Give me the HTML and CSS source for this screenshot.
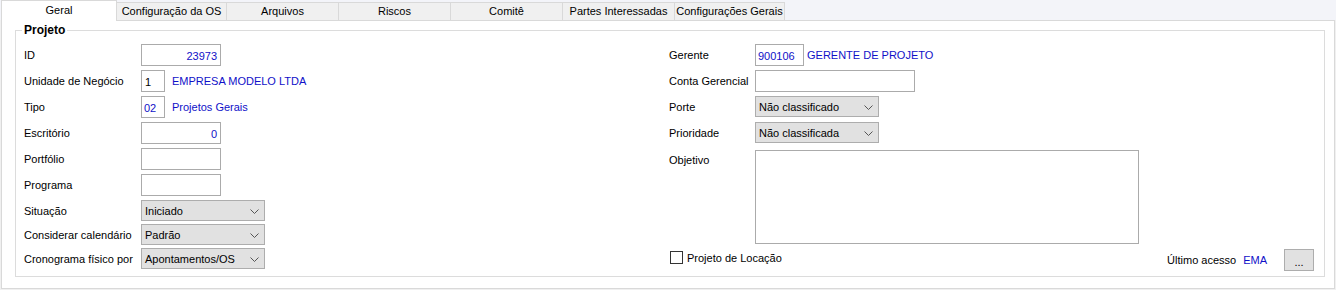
FILE: index.html
```html
<!DOCTYPE html>
<html lang="pt-BR">
<head>
    <meta charset="UTF-8">
    <title>Projeto</title>
    <link rel="stylesheet" href="styles.css">
</head>
<body>

<div class="tabs">
    <div class="tab active" style="width:116px">Geral</div>
    <div class="tab" style="width:111px">Configuração da OS</div>
    <div class="tab" style="width:113px">Arquivos</div>
    <div class="tab" style="width:113px">Riscos</div>
    <div class="tab" style="width:113px">Comitê</div>
    <div class="tab" style="width:113px">Partes Interessadas</div>
    <div class="tab" style="width:111px">Configurações Gerais</div>
</div>

<div class="panel">
    <div class="group">
        <div class="group-title">Projeto</div>
        <div class="cols">

            <!-- coluna esquerda -->
            <div class="col-left">
                <div class="row">
                    <label>ID</label>
                    <div class="box w80 num">23973</div>
                </div>
                <div class="row">
                    <label>Unidade de Negócio</label>
                    <div class="box w24">1</div>
                    <span class="value">EMPRESA MODELO LTDA</span>
                </div>
                <div class="row">
                    <label>Tipo</label>
                    <div class="box w24 blue">02</div>
                    <span class="value">Projetos Gerais</span>
                </div>
                <div class="row">
                    <label>Escritório</label>
                    <div class="box w80 num">0</div>
                </div>
                <div class="row">
                    <label>Portfólio</label>
                    <div class="box w80"></div>
                </div>
                <div class="row">
                    <label>Programa</label>
                    <div class="box w80"></div>
                </div>
                <div class="row combo">
                    <label>Situação</label>
                    <div class="select">Iniciado<svg class="chev" width="9" height="5" viewBox="0 0 9 5"><path d="M0.5 0.5 L4.5 4.5 L8.5 0.5" fill="none" stroke="#555" stroke-width="1"/></svg></div>
                </div>
                <div class="row combo">
                    <label>Considerar calendário</label>
                    <div class="select">Padrão<svg class="chev" width="9" height="5" viewBox="0 0 9 5"><path d="M0.5 0.5 L4.5 4.5 L8.5 0.5" fill="none" stroke="#555" stroke-width="1"/></svg></div>
                </div>
                <div class="row combo">
                    <label>Cronograma físico por</label>
                    <div class="select">Apontamentos/OS<svg class="chev" width="9" height="5" viewBox="0 0 9 5"><path d="M0.5 0.5 L4.5 4.5 L8.5 0.5" fill="none" stroke="#555" stroke-width="1"/></svg></div>
                </div>
            </div>

            <!-- coluna direita -->
            <div class="col-right">
                <div class="row">
                    <label>Gerente</label>
                    <div class="box w48 blue">900106</div>
                    <span class="value near">GERENTE DE PROJETO</span>
                </div>
                <div class="row">
                    <label>Conta Gerencial</label>
                    <div class="box w160"></div>
                </div>
                <div class="row combo wide">
                    <label>Porte</label>
                    <div class="select">Não classificado<svg class="chev" width="9" height="5" viewBox="0 0 9 5"><path d="M0.5 0.5 L4.5 4.5 L8.5 0.5" fill="none" stroke="#555" stroke-width="1"/></svg></div>
                </div>
                <div class="row combo wide">
                    <label>Prioridade</label>
                    <div class="select">Não classificada<svg class="chev" width="9" height="5" viewBox="0 0 9 5"><path d="M0.5 0.5 L4.5 4.5 L8.5 0.5" fill="none" stroke="#555" stroke-width="1"/></svg></div>
                </div>
                <div class="row memo">
                    <label>Objetivo</label>
                    <div class="textarea"></div>
                </div>
                <div class="footer">
                    <div class="check">
                        <span class="checkbox"></span>
                        <span>Projeto de Locação</span>
                    </div>
                    <div class="last">
                        <span>Último acesso</span>
                        <span class="value">EMA</span>
                        <button class="dots">...</button>
                    </div>
                </div>
            </div>

        </div>
    </div>
</div>

</body>
</html>
```

FILE: styles.css
```css
body {
    margin: 0;
    background-color: #f0f0f0;
    font-family: 'Liberation Sans', Arial, sans-serif;
    font-size: 11px;
    color: #000;
    white-space: nowrap;
}

/* abas */
.tabs {
    display: flex;
    align-items: flex-end;
    height: 20px;
    padding-left: 1px;
    background-color: #f3f4f9;
}

.tab {
    box-sizing: border-box;
    height: 18px;
    margin-left: -1px;
    border: 1px solid #d9d9d9;
    border-bottom: none;
    background-color: #f0f0f0;
    text-align: center;
    line-height: 16px;
}

.tab:first-child {
    margin-left: 0;
}

.tab.active {
    position: relative;
    z-index: 1;
    height: 21px;
    margin-bottom: -1px;
    background-color: #fff;
    line-height: 19px;
}

/* painel */
.panel {
    box-sizing: border-box;
    height: 269px;
    margin: 0 1px;
    border: 1px solid #d9d9d9;
    background-color: #fff;
    padding: 9px 9px 0 13px;
}

.group {
    box-sizing: border-box;
    height: 247px;
    border: 1px solid #dcdcdc;
    padding: 0 10px 0 8px;
}

.group-title {
    width: max-content;
    margin: -8px 0 0 -2px;
    padding: 0 2px;
    background-color: #fff;
    font-weight: bold;
    font-size: 12px;
    line-height: 14px;
}

.cols {
    display: flex;
    margin-top: 7px;
}

.col-left {
    width: 645px;
}

.col-right {
    flex: 1;
}

.row {
    display: flex;
    align-items: center;
    height: 22px;
    margin-bottom: 4px;
}

.row.combo {
    height: 21px;
    margin-bottom: 3px;
}

.row.combo.wide {
    margin-bottom: 5px;
}

.row.memo {
    align-items: flex-start;
    height: 94px;
    margin-top: 7px;
    margin-bottom: 5px;
}

.row label {
    width: 117px;
    flex-shrink: 0;
}

.col-right .row label {
    width: 86px;
}

.row.memo label {
    margin-top: 4px;
}

.box {
    box-sizing: border-box;
    height: 22px;
    border: 1px solid #ababab;
    background-color: #fff;
    padding: 0 3px;
    line-height: 22px;
    color: #000;
}

.box.num {
    text-align: right;
    color: #1010c8;
}

.box.blue {
    color: #1010c8;
    padding-left: 2px;
}

.w24 { width: 24px; }
.w48 { width: 49px; }
.w80 { width: 80px; }
.w160 { width: 160px; }

.value {
    margin-left: 7px;
    color: #1010c8;
}

.value.near {
    margin-left: 3px;
}

.select {
    box-sizing: border-box;
    display: flex;
    align-items: center;
    justify-content: space-between;
    width: 124px;
    height: 21px;
    border: 1px solid #adadad;
    background-color: #e1e1e1;
    padding: 1px 5px 0 3px;
}

.chev {
    display: block;
}

.textarea {
    box-sizing: border-box;
    width: 384px;
    height: 94px;
    border: 1px solid #ababab;
    background-color: #fff;
}

.footer {
    display: flex;
    justify-content: space-between;
    align-items: flex-start;
}

.check {
    display: flex;
    align-items: center;
    gap: 4px;
    margin-top: 2px;
    margin-left: 1px;
}

.checkbox {
    box-sizing: border-box;
    width: 13px;
    height: 13px;
    border: 1px solid #333;
    background-color: #fff;
}

.last {
    display: flex;
    align-items: center;
    margin-right: 0;
}

.last .value {
    margin-left: 7px;
}

.dots {
    box-sizing: border-box;
    width: 30px;
    height: 22px;
    margin-left: 17px;
    border: 1px solid #adadad;
    background-color: #e1e1e1;
    font-family: inherit;
    font-size: 11px;
    padding: 0;
    line-height: 24px;
    color: #000;
}
```
